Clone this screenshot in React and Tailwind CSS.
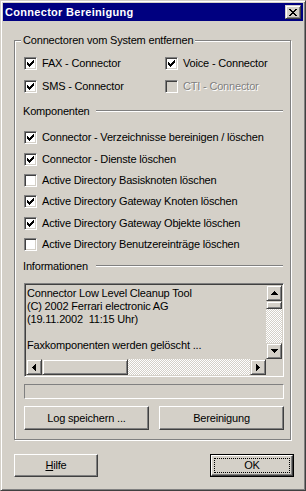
import React from "react";

const raised =
  "border border-t-white border-l-white border-r-[#404040] border-b-[#404040] shadow-[inset_-1px_-1px_0_#808080] bg-[#d4d0c8]";
const sbButton =
  "border border-t-[#d4d0c8] border-l-[#d4d0c8] border-r-[#404040] border-b-[#404040] shadow-[inset_1px_1px_0_#fff,inset_-1px_-1px_0_#808080] bg-[#d4d0c8]";
const sunken =
  "border border-t-[#808080] border-l-[#808080] border-r-white border-b-white shadow-[inset_1px_1px_0_#404040,inset_-1px_-1px_0_#d4d0c8]";
const track =
  "bg-[image:repeating-conic-gradient(#fff_0_25%,#d4d0c8_0_50%)] bg-[length:2px_2px]";

// classic 7x7 check glyph, one 3px column per x
const checkCols = [2, 3, 4, 3, 2, 1, 0];

const Check = ({ checked, disabled }) => (
  <span
    className={`relative block w-[13px] h-[13px] shrink-0 ${sunken} ${
      disabled ? "bg-[#d4d0c8]" : "bg-white"
    }`}
  >
    {checked && (
      <svg width="7" height="7" className="absolute left-[2px] top-[2px]" shapeRendering="crispEdges">
        {checkCols.map((y, x) => (
          <rect key={x} x={x} y={y} width="1" height="3" fill="#000" />
        ))}
      </svg>
    )}
  </span>
);

const CheckRow = ({ label, checked, disabled, h = "h-[23px]" }) => (
  <div className={`flex items-center gap-[5px] ${h}`}>
    <Check checked={checked} disabled={disabled} />
    <span className={disabled ? "text-[#808080] [text-shadow:1px_1px_0_#fff]" : ""}>{label}</span>
  </div>
);

const Separator = ({ label, className }) => (
  <div className={`flex items-center h-[14px] ${className}`}>
    <span className="w-[73px] ml-[-1px] shrink-0">{label}</span>
    <div className="flex-1 mr-[1px] h-[2px] border-t border-t-[#808080] border-b border-b-white" />
  </div>
);

const Arrow = ({ dir }) => {
  // tiny black triangles, drawn pixel-row by pixel-row
  const rows = [1, 3, 5, 7];
  if (dir === "up" || dir === "down") {
    return (
      <svg width="7" height="4" shapeRendering="crispEdges">
        {rows.map((w, i) => (
          <rect key={i} x={(7 - w) / 2} y={dir === "up" ? i : 3 - i} width={w} height="1" fill="#000" />
        ))}
      </svg>
    );
  }
  return (
    <svg width="4" height="7" shapeRendering="crispEdges">
      {rows.map((w, i) => (
        <rect key={i} x={dir === "left" ? i : 3 - i} y={(7 - w) / 2} width="1" height={w} fill="#000" />
      ))}
    </svg>
  );
};

const ScrollBtn = ({ dir, className = "" }) => (
  <div className={`flex items-center justify-center shrink-0 ${sbButton} ${className}`}>
    <Arrow dir={dir} />
  </div>
);

const Button = ({ children, className = "" }) => (
  <div className={`flex items-center justify-center ${raised} ${className}`}>{children}</div>
);

const closeX = [
  "XX....XX",
  ".XX..XX.",
  "..XXXX..",
  "...XX...",
  "..XXXX..",
  ".XX..XX.",
  "XX....XX",
];

export default function App() {
  const logLines = [
    "Connector Low Level Cleanup Tool",
    "(C) 2002 Ferrari electronic AG",
    "(19.11.2002  11:15 Uhr)",
    " ",
    "Faxkomponenten werden gelöscht ...",
  ];

  return (
    <div className="w-[306px] h-[491px] flex flex-col bg-[#d4d0c8] p-[2px] border border-t-[#d4d0c8] border-l-[#d4d0c8] border-r-[#404040] border-b-[#404040] shadow-[inset_1px_1px_0_#fff,inset_-1px_-1px_0_#808080] font-['Liberation_Sans',Arial,sans-serif] text-[11px] leading-[13px] tracking-[-0.18px] text-black select-none">
      {/* title bar */}
      <div className="h-[18px] shrink-0 flex items-center bg-[#000080] pl-[2px] pr-[2px]">
        <span className="flex-1 text-white font-bold text-[11px] tracking-[0.3px]">Connector Bereinigung</span>
        <div className={`w-[16px] h-[14px] flex items-center justify-center ${sbButton}`}>
          <svg width="8" height="7" shapeRendering="crispEdges">
            {closeX.map((row, y) =>
              row.split("").map((c, x) =>
                c === "X" ? <rect key={`${x}-${y}`} x={x} y={y} width="1" height="1" fill="#000" /> : null
              )
            )}
          </svg>
        </div>
      </div>

      {/* group box */}
      <div className="relative mt-[19px] ml-[11px] w-[277px] h-[400px] shrink-0 border border-[#808080] shadow-[inset_1px_1px_0_#fff,1px_1px_0_#fff]">
        <span className="absolute left-[6px] top-[-8px] px-[2px] leading-[14px] bg-[#d4d0c8]">
          Connectoren vom System entfernen
        </span>

        <div className="pl-[9px] pr-[6px] pt-[11px] flex flex-col">
          <div className="grid grid-cols-[141px_1fr]">
            <CheckRow label="FAX - Connector" checked />
            <CheckRow label="Voice - Connector" checked />
            <CheckRow label="SMS - Connector" checked />
            <CheckRow label="CTI - Connector" disabled />
          </div>

          <Separator label="Komponenten" className="mt-[6px]" />

          <div className="mt-[9px] flex flex-col">
            <CheckRow h="h-[21px]" label="Connector - Verzeichnisse bereinigen / löschen" checked />
            <CheckRow h="h-[22px]" label="Connector - Dienste löschen" checked />
            <CheckRow h="h-[21px]" label="Active Directory Basisknoten löschen" />
            <CheckRow h="h-[21px]" label="Active Directory Gateway Knoten löschen" checked />
            <CheckRow h="h-[22px]" label="Active Directory Gateway Objekte löschen" checked />
            <CheckRow h="h-[21px]" label="Active Directory Benutzereinträge löschen" />
          </div>

          <Separator label="Informationen" className="mt-[4px]" />

          {/* log box */}
          <div className={`mt-[10px] h-[94px] p-[1px] flex flex-col ${sunken}`}>
            <div className="flex flex-1 min-h-0">
              <div className="flex-1 pl-[1px] pt-[2px] overflow-hidden whitespace-pre">
                {logLines.map((l, i) => (
                  <div key={i} className="h-[13px]">{l}</div>
                ))}
              </div>
              <div className="w-[16px] flex flex-col">
                <ScrollBtn dir="up" className="h-[16px]" />
                <div className={`h-[8px] ${sbButton}`} />
                <div className={`flex-1 ${track}`} />
                <ScrollBtn dir="down" className="h-[16px]" />
              </div>
            </div>
            <div className="h-[16px] flex shrink-0">
              <ScrollBtn dir="left" className="w-[16px]" />
              <div className={`w-[86px] ${sbButton}`} />
              <div className={`flex-1 ${track}`} />
              <ScrollBtn dir="right" className="w-[16px]" />
              <div className="w-[16px] bg-[#d4d0c8]" />
            </div>
          </div>

          {/* progress */}
          <div className="mt-[7px] h-[15px] border border-t-[#808080] border-l-[#808080] border-r-white border-b-white" />

          <div className="mt-[7px] flex gap-[10px]">
            <Button className="w-[125px] h-[24px]">Log speichern ...</Button>
            <Button className="w-[125px] h-[24px]">Bereinigung</Button>
          </div>
        </div>
      </div>

      {/* dialog buttons */}
      <div className="mt-[14px] ml-[11px] mr-[9px] flex justify-between">
        <Button className="w-[84px] h-[23px]">
          <span>
            <span className="underline underline-offset-[1px]">H</span>ilfe
          </span>
        </Button>
        <div className="w-[84px] h-[23px] border border-black flex">
          <div className={`relative flex-1 flex items-center justify-center ${raised}`}>
            <span className="absolute inset-[2px] border border-dotted border-black" />
            OK
          </div>
        </div>
      </div>
    </div>
  );
}
